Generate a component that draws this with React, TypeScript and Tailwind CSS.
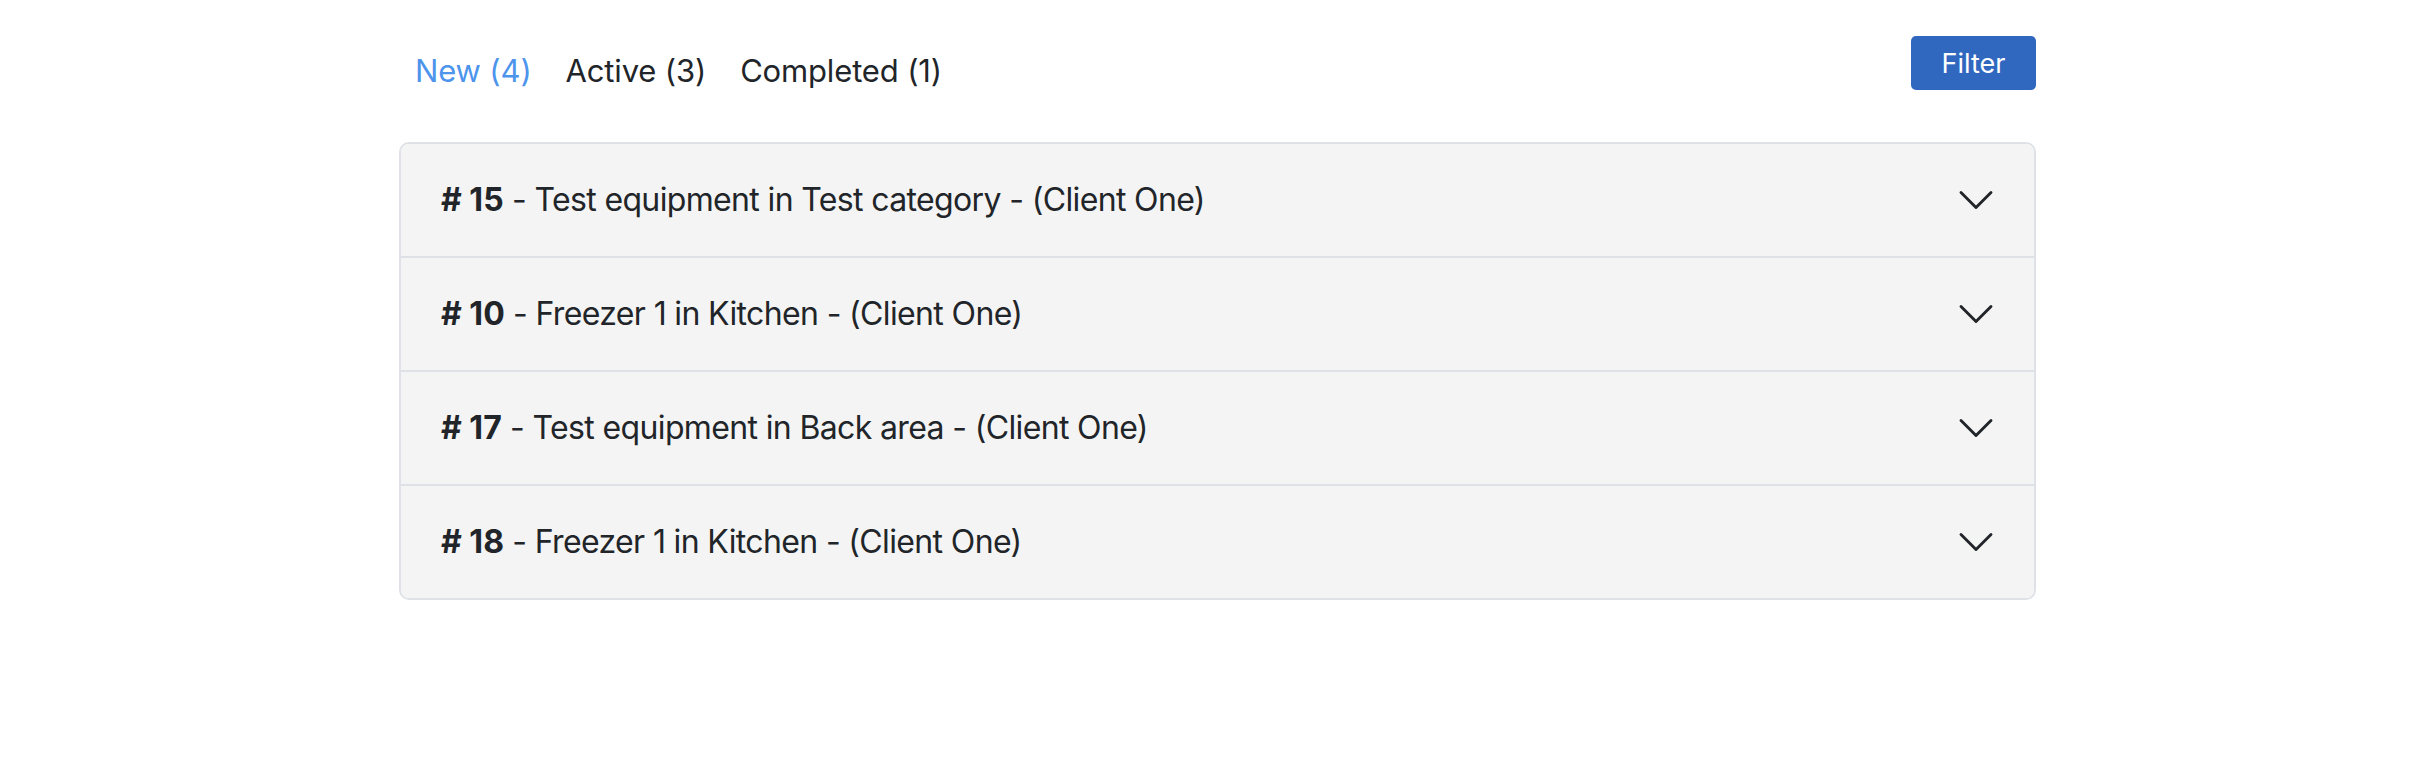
import { useState } from "react";

const tabs = [
  { label: "New", count: 4 },
  { label: "Active", count: 3 },
  { label: "Completed", count: 1 },
];

const requests = [
  { id: 15, text: "Test equipment in Test category - (Client One)" },
  { id: 10, text: "Freezer 1 in Kitchen - (Client One)" },
  { id: 17, text: "Test equipment in Back area - (Client One)" },
  { id: 18, text: "Freezer 1 in Kitchen - (Client One)" },
];

function Chevron() {
  return (
    <svg
      viewBox="0 0 16 16"
      className="h-[40px] w-[40px] shrink-0"
      fill="none"
      stroke="#212529"
      strokeWidth="1.15"
      strokeLinecap="round"
      strokeLinejoin="round"
    >
      <path d="M2 5L8 11L14 5" />
    </svg>
  );
}

export default function App() {
  const [activeTab, setActiveTab] = useState(0);
  const [open, setOpen] = useState<number | null>(null);

  return (
    <div className="min-h-[770px] bg-white font-['Inter','Liberation_Sans',sans-serif] text-[#212529]">
      <div className="ml-[399px] w-[1637px] pt-[36px]">
        <div className="flex items-start justify-between">
          <nav className="mt-[14px] flex gap-[34px] pl-[16px] text-[31px] leading-[42px] tracking-[-0.005em]">
            {tabs.map((tab, index) => (
              <button
                key={tab.label}
                onClick={() => setActiveTab(index)}
                className={activeTab === index ? "text-[#4d94ec]" : "text-[#212529]"}
              >
                {tab.label} ({tab.count})
              </button>
            ))}
          </nav>
          <button className="h-[54px] w-[125px] rounded-[5px] bg-[#3068c0] text-[27px] leading-none text-white">
            Filter
          </button>
        </div>

        <div className="mt-[50px] overflow-hidden rounded-[10px] border-2 border-[#dee2e6]">
          {requests.map((req, index) => (
            <div
              key={req.id}
              className={index > 0 ? "border-t-2 border-[#dee2e6]" : ""}
            >
              <button
                onClick={() => setOpen(open === index ? null : index)}
                className="flex w-full items-center justify-between bg-[#f4f4f4] py-[32px] pl-[40px] pr-[38px] text-left text-[32px] leading-[48px] tracking-[-0.02em]"
              >
                <span>
                  <span className="font-bold tracking-normal"># {req.id}</span> - {req.text}
                </span>
                <Chevron />
              </button>
            </div>
          ))}
        </div>
      </div>
    </div>
  );
}
